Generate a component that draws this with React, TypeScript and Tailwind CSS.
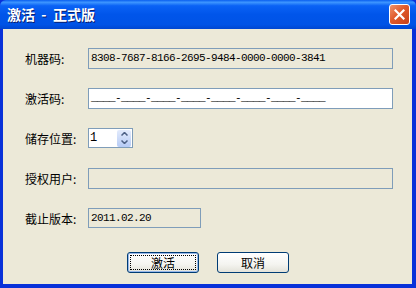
const CJK = "font-['SimSun','Noto_Sans_CJK_SC',sans-serif]";
const MONO = "font-['Liberation_Mono',monospace]";

function CloseButton() {
  return (
    <div className="flex h-[21px] w-[21px] items-center justify-center rounded-[3px] border border-white bg-[linear-gradient(135deg,#f0936b_0%,#e05a2b_45%,#c8411a_100%)]">
      <svg width="11" height="11" viewBox="0 0 11 11">
        <path d="M1.5 1.5 L9.5 9.5 M9.5 1.5 L1.5 9.5" stroke="#fff" strokeWidth="2.2" strokeLinecap="square" />
      </svg>
    </div>
  );
}

function Label({ children }: { children: string }) {
  return (
    <div className={`flex h-[21px] w-[63px] items-center text-[12px] text-black ${CJK}`}>
      {children}
    </div>
  );
}

function SpinBox() {
  return (
    <div className="flex h-[20px] w-[45px] items-center border border-[#7f9db9] bg-white pl-[1px] pr-[1px]">
      <span className={`flex-1 text-[12px] leading-none text-black ${MONO}`}>1</span>
      <div className="flex h-[17px] w-[14px] flex-col rounded-[2px] bg-[linear-gradient(180deg,#e3ebfc,#b6cbf5)]">
        <div className="flex flex-1 items-center justify-center">
          <svg width="7" height="4" viewBox="0 0 7 4">
            <path d="M0.5 3.5 L3.5 0.5 L6.5 3.5" fill="none" stroke="#4d6185" strokeWidth="1.5" />
          </svg>
        </div>
        <div className="flex flex-1 items-center justify-center">
          <svg width="7" height="4" viewBox="0 0 7 4">
            <path d="M0.5 0.5 L3.5 3.5 L6.5 0.5" fill="none" stroke="#4d6185" strokeWidth="1.5" />
          </svg>
        </div>
      </div>
    </div>
  );
}

function XpButton({ label, focused }: { label: string; focused?: boolean }) {
  return (
    <div
      className={[
        "flex h-[21px] w-[72px] items-center justify-center rounded-[3px] border border-[#003c74] bg-[linear-gradient(180deg,#ffffff_0%,#f4f4f0_60%,#e3e2d9_100%)] p-[2px]",
        focused ? "shadow-[inset_0_0_0_1px_#98b8ea]" : "",
      ].join(" ")}
    >
      <div
        className={[
          "flex h-full w-full items-center justify-center text-[12px] text-black",
          CJK,
          focused ? "border border-dotted border-black" : "",
        ].join(" ")}
      >
        {label}
      </div>
    </div>
  );
}

export default function App() {
  return (
    <div className="flex h-[288px] w-[416px] flex-col bg-[#0831d9]">
      <div className="flex h-[29px] items-center justify-between rounded-t-[6px] bg-[linear-gradient(180deg,#0a5fef_0%,#3d95ff_8%,#0a62f5_20%,#0055ea_50%,#0053e6_85%,#0046d0_100%)] pl-[7px] pr-[6px]">
        <span className={`whitespace-pre text-[14px] font-bold text-white [text-shadow:1px_1px_0_#0a1e6e] ${CJK}`}>
          激活  -  正式版
        </span>
        <CloseButton />
      </div>
      <div className="ml-[3px] mr-[4px] mb-[4px] flex flex-1 flex-col bg-[#ece9d8] pl-[22px] pr-[19px] pt-[19px]">
        <div className="flex flex-col gap-[19px]">
          <div className="flex h-[21px] items-start">
            <Label>机器码:</Label>
            <div className={`flex h-[21px] flex-1 items-center border border-[#7f9db9] pl-[2px] text-[11px] tracking-[-0.6px] text-black ${MONO}`}>
              8308-7687-8166-2695-9484-0000-0000-3841
            </div>
          </div>
          <div className="flex h-[21px] items-start">
            <Label>激活码:</Label>
            <div className={`flex h-[21px] flex-1 items-center border border-[#7f9db9] bg-white pl-[2px] text-[11px] tracking-[-0.6px] text-black ${MONO}`}>
              ____-____-____-____-____-____-____-____
            </div>
          </div>
          <div className="flex h-[21px] items-start">
            <Label>储存位置:</Label>
            <SpinBox />
          </div>
          <div className="flex h-[21px] items-start">
            <Label>授权用户:</Label>
            <div className="h-[21px] flex-1 border border-[#7f9db9]" />
          </div>
          <div className="flex h-[21px] items-start">
            <Label>截止版本:</Label>
            <div className={`flex h-[20px] w-[113px] items-center border border-[#7f9db9] pl-[2px] text-[11px] tracking-[-0.6px] text-black ${MONO}`}>
              2011.02.20
            </div>
          </div>
        </div>
        <div className="mt-[23px] flex gap-[18px] pl-[102px]">
          <XpButton label="激活" focused />
          <XpButton label="取消" />
        </div>
      </div>
    </div>
  );
}
